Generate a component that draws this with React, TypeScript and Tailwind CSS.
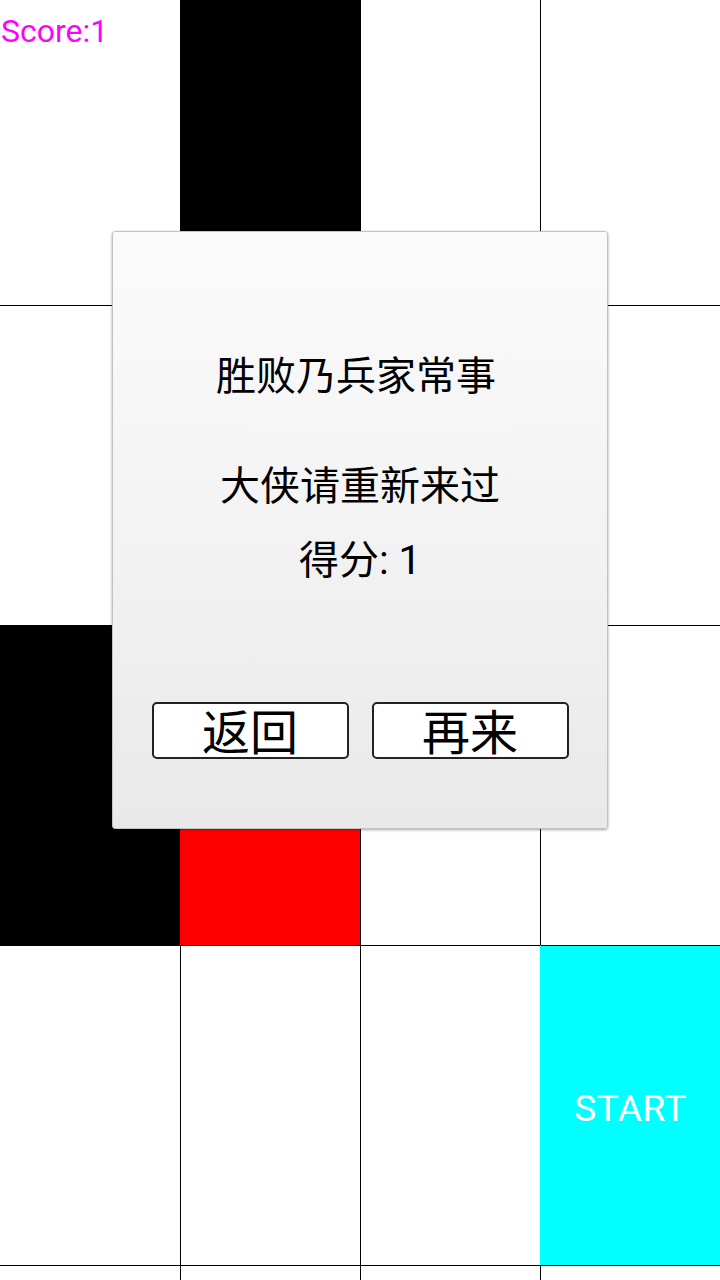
import React from 'react';

type Tile = 'white' | 'black' | 'red' | 'cyan';

// board state after a miss: rows from top to bottom, four lanes each
const board: Tile[][] = [
  ['white', 'black', 'white', 'white'],
  ['white', 'white', 'white', 'white'],
  ['black', 'red', 'white', 'white'],
  ['white', 'white', 'white', 'cyan'],
  ['white', 'white', 'white', 'white'],
];

const rowHeights = ['h-[305px]', 'h-[320px]', 'h-[320px]', 'h-[320px]', 'flex-1'];

const fill: Record<Tile, string> = {
  white: 'bg-white border-l-black',
  black: 'bg-black border-l-black',
  red: 'bg-[#ff0000] border-l-[#ff0000]',
  cyan: 'bg-[#00ffff] border-l-[#00ffff]',
};

function Cell({ tile, row, col }: { tile: Tile; row: number; col: number }) {
  return (
    <div
      className={`w-[180px] h-full flex items-center justify-center ${fill[tile]} ${
        col > 0 ? 'border-l' : ''
      } ${row > 0 ? 'border-t border-t-black' : ''}`}
    >
      {tile === 'cyan' && (
        <span className="text-white text-[37px] leading-none pt-[5px] font-['Roboto',sans-serif] tracking-[0.5px]">
          START
        </span>
      )}
    </div>
  );
}

function GameOverDialog() {
  return (
    <div className="absolute left-[112px] top-[231px] w-[496px] h-[598px] rounded-[3px] border border-[#c2c2c2] bg-linear-to-b from-[#fbfbfb] via-[#f3f3f3] to-[#e9e9e9] shadow-[0_1px_3px_rgba(0,0,0,0.35)] flex flex-col items-center pt-[125px] font-['Roboto','Noto_Sans_CJK_SC',sans-serif] text-black">
      <p className="text-[40px] leading-[40px] -ml-[8px]">胜败乃兵家常事</p>
      <p className="text-[40px] leading-[40px] mt-[70px]">大侠请重新来过</p>
      <p className="text-[40px] leading-[40px] mt-[34px]">得分: 1</p>
      <div className="flex gap-[23px] mt-[121px]">
        <button className="w-[197px] h-[57px] bg-white border-2 border-[#222222] rounded-[5px] text-[48px] leading-none pt-[6px] flex items-center justify-center">
          返回
        </button>
        <button className="w-[197px] h-[57px] bg-white border-2 border-[#222222] rounded-[5px] text-[48px] leading-none pt-[6px] flex items-center justify-center">
          再来
        </button>
      </div>
    </div>
  );
}

export default function App() {
  return (
    <div className="relative w-[720px] h-[1280px] overflow-hidden bg-white">
      <div className="flex flex-col h-full">
        {board.map((row, r) => (
          <div key={r} className={`flex ${rowHeights[r]}`}>
            {row.map((tile, c) => (
              <Cell key={c} tile={tile} row={r} col={c} />
            ))}
          </div>
        ))}
      </div>

      <span className="absolute left-[1px] top-[11px] text-[32px] leading-[40px] text-[#ff00ff] font-['Roboto',sans-serif]">
        Score:1
      </span>

      <GameOverDialog />
    </div>
  );
}
